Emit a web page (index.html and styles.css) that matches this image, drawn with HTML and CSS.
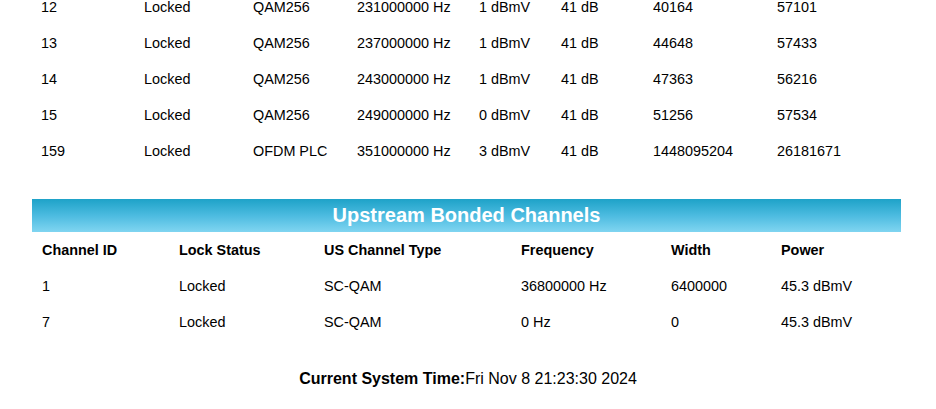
FILE: index.html
```html
<!DOCTYPE html>
<html>
<head>
<meta charset="utf-8">
<link rel="stylesheet" href="styles.css">
</head>
<body>
<div class="page">
  <div class="ds-table">
    <div class="ds-row"><span>12</span><span>Locked</span><span>QAM256</span><span>231000000 Hz</span><span>1 dBmV</span><span>41 dB</span><span>40164</span><span>57101</span></div>
    <div class="ds-row"><span>13</span><span>Locked</span><span>QAM256</span><span>237000000 Hz</span><span>1 dBmV</span><span>41 dB</span><span>44648</span><span>57433</span></div>
    <div class="ds-row"><span>14</span><span>Locked</span><span>QAM256</span><span>243000000 Hz</span><span>1 dBmV</span><span>41 dB</span><span>47363</span><span>56216</span></div>
    <div class="ds-row"><span>15</span><span>Locked</span><span>QAM256</span><span>249000000 Hz</span><span>0 dBmV</span><span>41 dB</span><span>51256</span><span>57534</span></div>
    <div class="ds-row"><span>159</span><span>Locked</span><span>OFDM PLC</span><span>351000000 Hz</span><span>3 dBmV</span><span>41 dB</span><span>1448095204</span><span>26181671</span></div>
  </div>

  <div class="section">
    <div class="banner">Upstream Bonded Channels</div>
    <div class="us-table">
      <div class="us-row us-head"><span>Channel ID</span><span>Lock Status</span><span>US Channel Type</span><span>Frequency</span><span>Width</span><span>Power</span></div>
      <div class="us-row"><span>1</span><span>Locked</span><span>SC-QAM</span><span>36800000 Hz</span><span>6400000</span><span>45.3 dBmV</span></div>
      <div class="us-row"><span>7</span><span>Locked</span><span>SC-QAM</span><span>0 Hz</span><span>0</span><span>45.3 dBmV</span></div>
    </div>
  </div>

  <p class="systime"><b>Current System Time:</b>Fri Nov 8 21:23:30 2024</p>
</div>
</body>
</html>
```

FILE: styles.css
```css
html, body {
  margin: 0;
  padding: 0;
  background: #ffffff;
}
body {
  font-family: "Liberation Sans", Arial, sans-serif;
  font-size: 14.4px;
  color: #000000;
}
.page {
  width: 936px;
  margin-top: -11px;
}
.ds-table {
  padding-left: 41px;
}
.ds-row {
  display: grid;
  grid-template-columns: 103px 109px 104px 122px 82px 92px 124px 1fr;
  height: 36px;
  align-items: center;
}
.section {
  margin: 30px 35px 0 32px;
}
.banner {
  height: 33px;
  line-height: 33px;
  background: linear-gradient(to bottom, #1ea2c8 0%, #4cbbe0 50%, #80d5f1 100%);
  color: #ffffff;
  font-weight: bold;
  font-size: 20px;
  text-align: center;
}
.us-table {
  padding-left: 10px;
}
.us-row {
  display: grid;
  grid-template-columns: 137px 145px 197px 150px 110px 1fr;
  height: 36px;
  align-items: center;
}
.us-head {
  font-weight: bold;
}
.systime {
  margin: 29px 0 0 0;
  text-align: center;
  font-size: 16px;
  line-height: 20px;
}
```
